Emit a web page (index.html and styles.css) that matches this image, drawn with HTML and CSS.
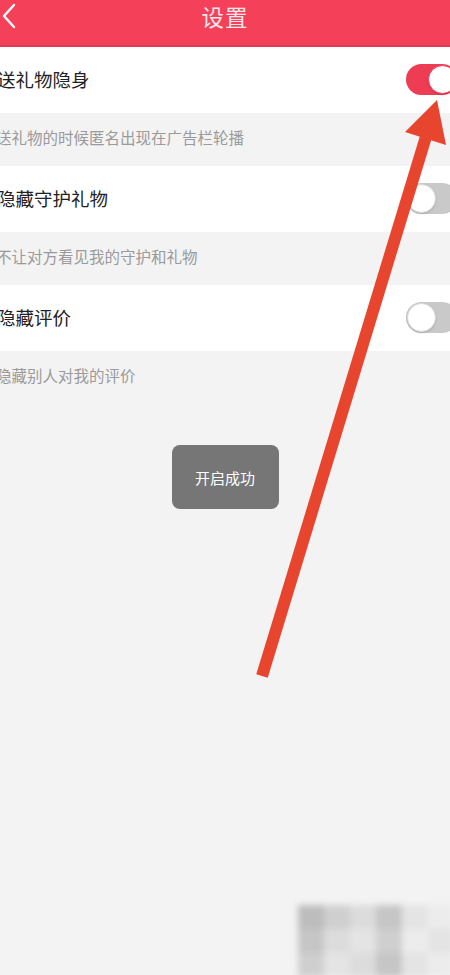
FILE: index.html
```html
<!DOCTYPE html>
<html lang="zh">
<head>
<meta charset="utf-8">
<title>设置</title>
<link rel="stylesheet" href="styles.css">
</head>
<body>
<div class="page">
  <header class="topbar">
    <svg class="back" width="16" height="26" viewBox="0 0 16 26"><path d="M13 2 L3 13 L13 24" fill="none" stroke="#ffffff" stroke-width="2.4" stroke-linecap="round" stroke-linejoin="round"/></svg>
    <h1 class="title">设置</h1>
  </header>

  <section class="group">
    <div class="row">
      <span class="label">送礼物隐身</span>
      <span class="switch on"><span class="knob"></span></span>
    </div>
    <div class="desc">送礼物的时候匿名出现在广告栏轮播</div>
  </section>

  <section class="group">
    <div class="row">
      <span class="label">隐藏守护礼物</span>
      <span class="switch"><span class="knob"></span></span>
    </div>
    <div class="desc">不让对方看见我的守护和礼物</div>
  </section>

  <section class="group">
    <div class="row">
      <span class="label">隐藏评价</span>
      <span class="switch"><span class="knob"></span></span>
    </div>
    <div class="desc">隐藏别人对我的评价</div>
  </section>

  <div class="toast-wrap"><div class="toast">开启成功</div></div>

  <svg class="arrow" width="450" height="975" viewBox="0 0 450 975">
    <line x1="262" y1="676" x2="428" y2="130" stroke="#e8452f" stroke-width="12"/>
    <polygon points="437,100 405,132 446,145" fill="#e8452f"/>
  </svg>

  <div class="mosaic">
    <span class="m1"></span><span class="m2"></span><span class="m3"></span><span class="m4"></span><span class="m5"></span><span class="m6"></span>
    <span class="m4"></span><span class="m3"></span><span class="m5"></span><span class="m2"></span><span class="m6"></span><span class="m5"></span>
    <span class="m2"></span><span class="m5"></span><span class="m3"></span><span class="m4"></span><span class="m5"></span><span class="m6"></span>
  </div>
</div>
</body>
</html>
```

FILE: styles.css
```css
html, body {
  margin: 0;
  padding: 0;
}
body {
  width: 450px;
  height: 975px;
  overflow: hidden;
  background: #f3f3f3;
  font-family: "Noto Sans CJK SC", "Noto Sans", sans-serif;
}
.page {
  position: relative;
  width: 450px;
  height: 975px;
  overflow: hidden;
}
.topbar {
  height: 45px;
  background: #f5405a;
  border-bottom: 2px solid #e23a52;
  display: flex;
  align-items: center;
  justify-content: center;
  position: relative;
}
.back {
  position: absolute;
  left: 1px;
  top: 3px;
}
.title {
  margin: 0 0 13px;
  color: #fbe7ea;
  font-size: 22.5px;
  font-weight: 400;
  letter-spacing: 1px;
}
.group {
  display: flex;
  flex-direction: column;
}
.row {
  height: 66px;
  background: #ffffff;
  display: flex;
  align-items: center;
  justify-content: space-between;
  margin-left: -3px;
  margin-right: -8px;
}
.label {
  font-size: 18.5px;
  color: #222222;
  margin-top: -2px;
}
.desc {
  height: 53px;
  display: flex;
  align-items: center;
  margin-left: -4px;
  font-size: 15.5px;
  color: #9a9a9a;
  padding-bottom: 6px;
  box-sizing: border-box;
}
.switch {
  width: 52px;
  height: 31px;
  border-radius: 16px;
  background: #c9c9c9;
  position: relative;
  box-sizing: border-box;
  margin-top: -2px;
}
.switch .knob {
  position: absolute;
  top: 1px;
  left: 1px;
  width: 27px;
  height: 27px;
  border-radius: 50%;
  background: #ffffff;
  border: 1px solid #d8d8d8;
  box-shadow: 0 1px 2px rgba(0,0,0,0.15);
}
.switch.on {
  background: #ef3c55;
}
.switch.on .knob {
  left: 22px;
  border-color: #ef3c55;
}
.toast-wrap {
  display: flex;
  justify-content: center;
  padding-top: 41px;
}
.toast {
  width: 107px;
  height: 64px;
  border-radius: 8px;
  background: #767676;
  color: #ffffff;
  font-size: 15px;
  display: flex;
  align-items: center;
  justify-content: center;
}
.arrow {
  position: absolute;
  left: 0;
  top: 0;
  pointer-events: none;
}
.mosaic {
  position: absolute;
  left: 298px;
  top: 905px;
  width: 156px;
  height: 72px;
  display: grid;
  grid-template-columns: repeat(6, 1fr);
  grid-template-rows: repeat(3, 1fr);
  filter: blur(3px);
}
.mosaic .m1 { background: #bdbdbd; }
.mosaic .m2 { background: #cfcfcf; }
.mosaic .m3 { background: #dcdcdc; }
.mosaic .m4 { background: #c6c6c6; }
.mosaic .m5 { background: #e4e4e4; }
.mosaic .m6 { background: #ececec; }
```
